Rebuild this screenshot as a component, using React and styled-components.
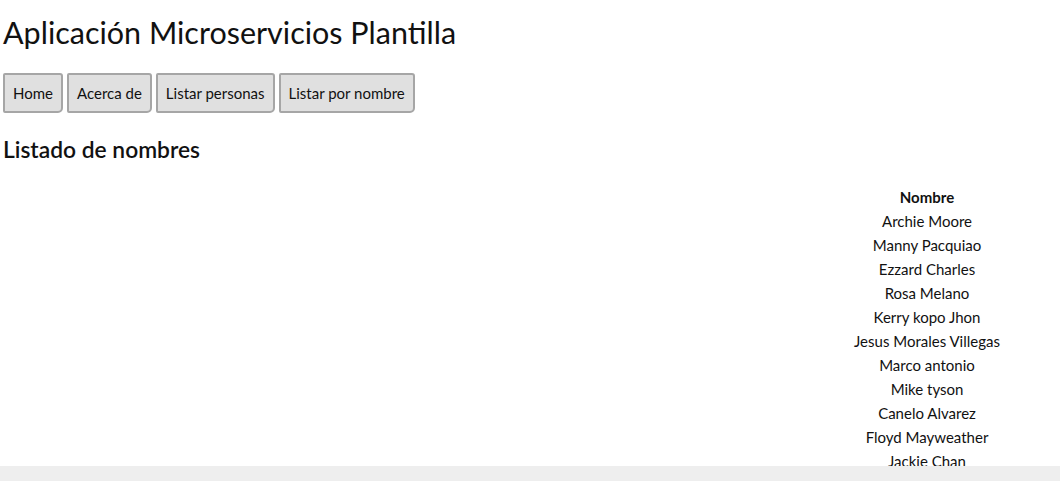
import React from 'react';
import styled, { createGlobalStyle } from 'styled-components';

const GlobalStyle = createGlobalStyle`
  html, body {
    margin: 0;
    padding: 0;
    background-color: #eeeeee;
    font-family: Lato, "Open Sans", sans-serif;
    color: #111;
  }
`;

const nombres = [
  'Archie Moore',
  'Manny Pacquiao',
  'Ezzard Charles',
  'Rosa Melano',
  'Kerry kopo Jhon',
  'Jesus Morales Villegas',
  'Marco antonio',
  'Mike tyson',
  'Canelo Alvarez',
  'Floyd Mayweather',
  'Jackie Chan',
];

const App = () => {
  return (
    <>
      <GlobalStyle />
      <Page>
        <Title>Aplicación Microservicios Plantilla</Title>
        <Nav>
          <NavButton>Home</NavButton>
          <NavButton>Acerca de</NavButton>
          <NavButton>Listar personas</NavButton>
          <NavButton>Listar por nombre</NavButton>
        </Nav>
        <Subtitle>Listado de nombres</Subtitle>
        <TableWrap>
          <Table>
            <thead>
              <tr>
                <Th>Nombre</Th>
              </tr>
            </thead>
            <tbody>
              {nombres.map(n => (
                <tr key={n}>
                  <Td>{n}</Td>
                </tr>
              ))}
            </tbody>
          </Table>
        </TableWrap>
      </Page>
    </>
  );
};

const Page = styled.div`
  background-color: #fff;
  height: 466px;
  padding: 0 3px;
  box-sizing: border-box;
`;

const Title = styled.h1`
  margin: 0;
  padding-top: 12px;
  font-size: 30.5px;
  font-weight: 400;
  line-height: 40px;
`;

const Nav = styled.div`
  display: flex;
  gap: 4px;
  margin-top: 21px;
`;

const NavButton = styled.button`
  height: 40px;
  padding: 0 8px;
  font-family: inherit;
  font-size: 15px;
  color: #111;
  background-color: #e0e0e0;
  border: 2px solid #a6a6a6;
  border-radius: 2px 3px 5px 2px;
  cursor: pointer;
`;

const Subtitle = styled.h2`
  margin: 20px 0 0;
  font-size: 22.8px;
  font-weight: 600;
  line-height: 32px;
`;

const TableWrap = styled.div`
  display: flex;
  justify-content: flex-end;
  margin-top: 20px;
`;

const Table = styled.table`
  width: 250px;
  border-collapse: collapse;
  margin-right: 5px;
`;

const Th = styled.th`
  font-size: 15px;
  font-weight: 700;
  line-height: 24px;
  padding: 0;
  text-align: center;
`;

const Td = styled.td`
  font-size: 15px;
  line-height: 24px;
  padding: 0;
  text-align: center;
`;

export default App;
